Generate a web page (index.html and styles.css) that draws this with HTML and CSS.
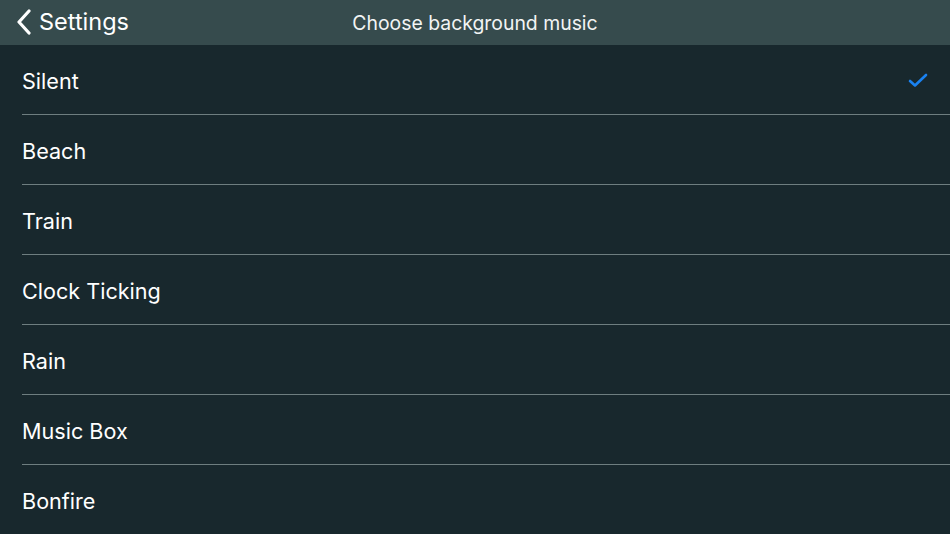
FILE: index.html
```html
<!DOCTYPE html>
<html>
<head>
<meta charset="utf-8">
<link rel="stylesheet" href="styles.css">
</head>
<body>
<header class="nav">
  <div class="back">
    <svg class="chev" width="16" height="26" viewBox="0 0 16 26"><path d="M13 2 L3 13 L13 24" fill="none" stroke="#ffffff" stroke-width="3.2" stroke-linecap="round" stroke-linejoin="round"/></svg>
    <span>Settings</span>
  </div>
  <div class="title">Choose background music</div>
</header>
<ul class="list">
  <li class="row"><span>Silent</span><svg class="check" width="20" height="15" viewBox="0 0 20 15"><path d="M2 8 L7 12.5 L18 2" fill="none" stroke="#1a82f0" stroke-width="2.6" stroke-linecap="round" stroke-linejoin="round"/></svg></li>
  <li class="row"><span>Beach</span></li>
  <li class="row"><span>Train</span></li>
  <li class="row"><span>Clock Ticking</span></li>
  <li class="row"><span>Rain</span></li>
  <li class="row"><span>Music Box</span></li>
  <li class="row"><span>Bonfire</span></li>
</ul>
</body>
</html>
```
FILE: styles.css
```css
html, body {
  margin: 0;
  padding: 0;
  background: #18282d;
  width: 950px;
  height: 534px;
  overflow: hidden;
  font-family: Inter, "Noto Sans", sans-serif;
  color: #ffffff;
}
.nav {
  position: relative;
  height: 45px;
  background: #364b4d;
  display: flex;
  align-items: center;
  justify-content: center;
}
.back {
  position: absolute;
  left: 16px;
  top: 0;
  height: 43px;
  display: flex;
  align-items: center;
  gap: 7px;
  font-size: 23.5px;
}
.chev { display: block; }
.title {
  font-size: 19.4px;
  color: #f2f4f4;
  margin-top: 1px;
}
.list {
  list-style: none;
  margin: 0;
  padding: 0 0 0 22px;
}
.row {
  height: 69px;
  border-bottom: 1px solid #6e7e80;
  display: flex;
  align-items: center;
  justify-content: space-between;
  padding-right: 22px;
  font-size: 21.6px;
}
.row span { margin-top: 2px; }
.check { display: block; margin-top: 2px; }
```
